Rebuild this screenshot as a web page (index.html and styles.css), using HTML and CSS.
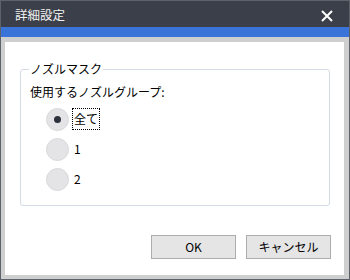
FILE: index.html
```html
<!DOCTYPE html>
<html lang="ja">
<head>
<meta charset="utf-8">
<link rel="stylesheet" href="styles.css">
</head>
<body>
<div class="window">
  <div class="titlebar">
    <span class="title">詳細設定</span>
    <svg class="close" width="12" height="12" viewBox="0 0 12 12"><path d="M1 1 L11 11 M11 1 L1 11" stroke="#ffffff" stroke-width="2" fill="none"/></svg>
  </div>
  <div class="accent"></div>
  <div class="frame">
    <div class="panel">
      <fieldset class="group">
        <legend class="legend">ノズルマスク</legend>
        <div class="label">使用するノズルグループ:</div>
        <div class="radios">
          <div class="radio"><span class="circle checked"><span class="dot"></span></span><span class="rtext focus">全て</span></div>
          <div class="radio"><span class="circle"></span><span class="rtext">1</span></div>
          <div class="radio"><span class="circle"></span><span class="rtext">2</span></div>
        </div>
      </fieldset>
      <div class="buttons">
        <button class="btn">OK</button>
        <button class="btn">キャンセル</button>
      </div>
    </div>
  </div>
</div>
</body>
</html>
```
FILE: styles.css
```css
html, body {
  margin: 0;
  padding: 0;
}
body {
  font-family: "Noto Sans CJK JP", "Noto Sans", sans-serif;
  font-size: 12px;
  color: #000;
}
.window {
  width: 350px;
  height: 280px;
  box-sizing: border-box;
  border: 1px solid #5e626a;
  background: #cfcfcf;
  display: flex;
  flex-direction: column;
}
.titlebar {
  height: 26px;
  background: #3a3f4a;
  display: flex;
  align-items: center;
  justify-content: space-between;
  padding: 2px 15px 0 14px;
  box-sizing: border-box;
  flex: none;
}
.title {
  color: #f2f2f2;
  font-size: 12.5px;
  line-height: 16px;
}
.close {
  display: block;
  margin-top: 1px;
  margin-right: 1px;
}
.accent {
  height: 10px;
  background: #3a74d9;
  flex: none;
}
.frame {
  flex: 1;
  padding: 5px 5px 4px 4px;
  display: flex;
  min-height: 0;
}
.panel {
  flex: 1;
  background: #fff;
  display: flex;
  flex-direction: column;
}
.group {
  margin: 19px 14px 0 15px;
  padding: 7px 9px 11px 8px;
  border: 1px solid #d3dbe4;
  border-radius: 3px;
  min-width: 0;
}
.legend {
  padding: 0 1px;
  line-height: 16px;
  font-size: 12px;
}
.label {
  line-height: 16px;
  padding-left: 1px;
}
.radios {
  margin-top: 4px;
  display: flex;
  flex-direction: column;
}
.radio {
  height: 30px;
  display: flex;
  align-items: center;
  padding-left: 17px;
}
.circle {
  width: 23px;
  height: 23px;
  box-sizing: border-box;
  border-radius: 50%;
  background: #e4e4e6;
  border: 1px solid #d9d9dc;
  display: flex;
  align-items: center;
  justify-content: center;
  flex: none;
}
.dot {
  width: 7px;
  height: 7px;
  border-radius: 50%;
  background: #2c313c;
}
.rtext {
  margin-left: 3px;
  line-height: 16px;
  padding: 2px 1px;
  border: 1px dotted transparent;
}
.rtext.focus {
  border-color: #000;
}
.buttons {
  margin-top: 29px;
  display: flex;
  justify-content: flex-end;
  gap: 10px;
  padding-right: 13px;
}
.btn {
  width: 85px;
  height: 24px;
  background: #e5e5e5;
  border: 1px solid #adadad;
  border-radius: 0;
  font-family: "Noto Sans CJK JP", "Noto Sans", sans-serif;
  font-size: 12px;
  color: #000;
  padding: 0;
  line-height: 16px;
}
```
